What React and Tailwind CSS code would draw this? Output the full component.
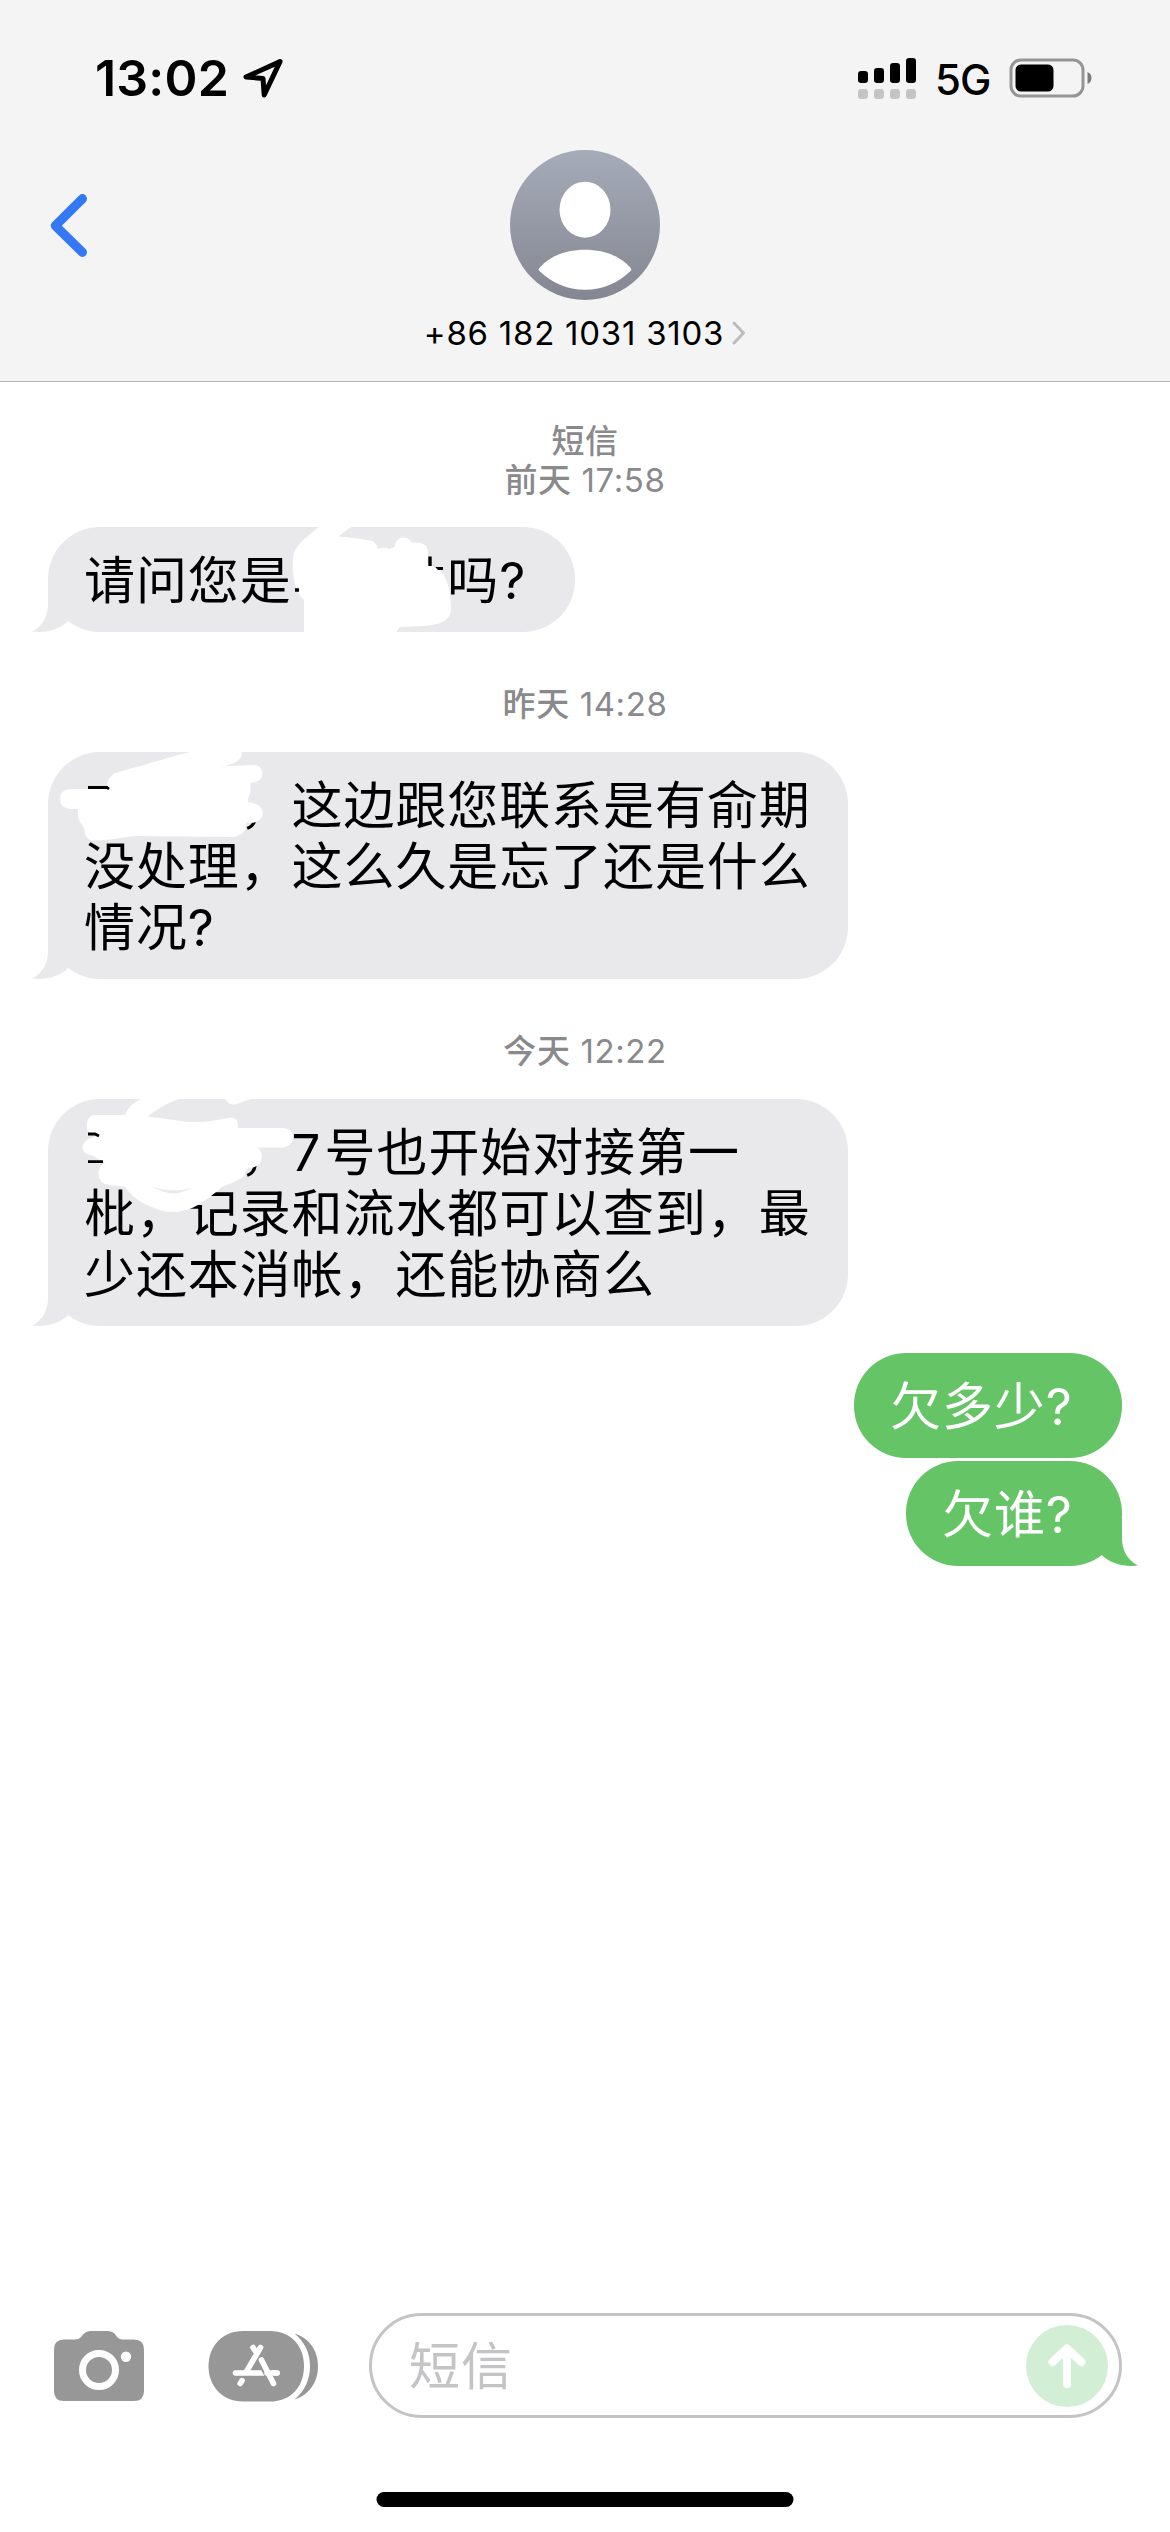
import React from 'react';

function StatusBar() {
  return (
    <div className="flex h-[156px] items-center justify-between pl-[95px] pr-[78px]">
      <div className="flex items-center gap-[12px]">
        <span className="text-[50px] font-semibold leading-[60px] tracking-[0.2px] text-black">13:02</span>
        <svg className="h-[42px] w-[44px]" viewBox="240 57 44 42" fill="none">
          <path d="M279 61.6 245 77 262 78.4 263.2 95Z" stroke="#000" strokeWidth="5" strokeLinejoin="round" />
        </svg>
      </div>
      <div className="flex items-center">
        <svg className="h-[42px] w-[58px]" viewBox="856 56 58 42">
          <rect x="856" y="70" width="10" height="12" rx="3.2" />
          <rect x="872" y="67" width="10" height="15" rx="3.2" />
          <rect x="888" y="62" width="10" height="20" rx="3.2" />
          <rect x="904" y="57" width="10" height="25" rx="3.2" />
          {[856, 872, 888, 904].map((x) => (
            <rect key={x} x={x} y="88" width="10" height="10" rx="3.2" fill="#c4c4c4" />
          ))}
        </svg>
        <span className="ml-[19px] mt-[3px] w-[74px] text-[42px] font-medium leading-[48px] tracking-[-1px] text-black">5G</span>
        <svg className="h-[40px] w-[83px]" viewBox="1008.5 57.5 83 40">
          <rect x="1010.5" y="59.5" width="72" height="36" rx="10" fill="none" stroke="#959595" strokeWidth="3" />
          <rect x="1015" y="64" width="38" height="27" rx="5.5" />
          <path d="M1087 71.5Q1091 73 1091 77.5T1087 83.5Z" fill="#7c7c7c" />
        </svg>
      </div>
    </div>
  );
}

function Header() {
  return (
    <header className="h-[382px] border-b border-[#b2b2b2] bg-[#f4f4f4]">
      <StatusBar />
      <div className="grid grid-cols-[1fr_auto_1fr] items-start">
        <svg className="ml-[49px] mt-[37px] h-[66px] w-[40px]" viewBox="49 193 40 66" fill="none">
          <path d="M82.4 198.7 55.3 225.7 82.4 252.3" stroke="#3478f6" strokeWidth="9.2" strokeLinecap="round" strokeLinejoin="round" />
        </svg>
        <div className="-mt-[6px] flex flex-col items-center">
          <svg className="h-[150px] w-[150px]" viewBox="0 0 150 150">
            <defs>
              <linearGradient id="avatar" x1="0" y1="0" x2="0" y2="1">
                <stop offset="0" stopColor="#a6abb9" />
                <stop offset="1" stopColor="#848791" />
              </linearGradient>
            </defs>
            <circle cx="75" cy="75" r="75" fill="url(#avatar)" />
            <ellipse cx="75" cy="59.7" rx="25.5" ry="28" fill="#fff" />
            <path d="M29.3 118C40 106 56 99.7 75 99.7S110 106 120.7 118Q122 119.5 120.5 121C108 133 93 139.7 75 139.7S42 133 29.5 121Q28 119.5 29.3 118Z" fill="#fff" />
          </svg>
          <div className="mt-[13px] flex items-center gap-[8px]">
            <span className="whitespace-nowrap text-[33px] leading-[40px] tracking-[0.75px] text-black">+86 182 1031 3103</span>
            <svg className="h-[26px] w-[14px]" viewBox="0 0 14 26" fill="none">
              <path d="M2 3 11.5 13 2 23" stroke="#bcbcbe" strokeWidth="3" strokeLinecap="round" strokeLinejoin="round" />
            </svg>
          </div>
        </div>
      </div>
    </header>
  );
}

function Stamp({ title, day, time, className }) {
  return (
    <div className={`text-center text-[33px] leading-[39px] text-[#8a8a8d] ${className}`}>
      {title && <div className="font-medium tracking-[0.6px]">{title}</div>}
      <div className="tracking-[0.6px]">
        <span className="font-medium">{day}</span> {time}
      </div>
    </div>
  );
}

function Bubble({ sent, tail, className, lines, children }) {
  return (
    <div className={`relative rounded-[52px] pb-[21px] pl-[36px] pt-[23px] text-[51px] leading-[61px] tracking-[0.9px] ${sent ? 'self-end bg-[#65c466] text-white' : 'bg-[#e9e9eb] text-black'} ${className}`}>
      {tail && (
        <svg
          className={`absolute bottom-0 h-[48px] w-[40px] ${sent ? '-right-[16px] -scale-x-100 text-[#65c466]' : '-left-[16px] text-[#e9e9eb]'}`}
          viewBox="0 0 40 48"
        >
          <path d="M16 0V20C16 32 11 42 0 47.5C14 49.5 28 45 36.6 36.7L38 20Z" fill="currentColor" />
        </svg>
      )}
      {lines.map((line, i) => (
        <div key={i} className="relative whitespace-nowrap">{line}</div>
      ))}
      {children}
    </div>
  );
}

// Blank run that keeps the room of a hidden three-character name
const Hidden = () => <span className="inline-block w-[155.7px]" />;

function Composer() {
  return (
    <footer className="flex h-[219px] items-start pl-[54px] pr-[48px]">
      <svg className="mt-[18px] h-[70px] w-[90px]" viewBox="0 0 90 70">
        <path d="M10 8.5H21Q25 8.5 27 6L30 2.5Q32.5 0 36 0H54Q58 0 60.5 2.5L63 6Q65 8.5 69 8.5H80Q90 8.5 90 18.5V60Q90 70 80 70H10Q0 70 0 60V18.5Q0 8.5 10 8.5Z" fill="#979797" />
        <circle cx="45" cy="39" r="16.5" fill="none" stroke="#fff" strokeWidth="7" />
        <circle cx="72" cy="25.7" r="5.2" fill="#fff" />
      </svg>
      <svg className="ml-[64px] mt-[18px] h-[71px] w-[110px]" viewBox="208 2331 110 71">
        <path d="M243 2331H270C291 2331 304 2346 304 2366.2S291 2401.5 270 2401.5H243C222 2401.5 208.5 2386 208.5 2366.2S222 2331 243 2331Z" fill="#979797" />
        <path d="M294.5 2333.5C309 2338 318 2350 318 2366.2S309 2395 294.5 2399.5C304.5 2391 310 2380 310 2366.2S304.5 2342 294.5 2333.5Z" fill="#979797" />
        <g fill="none" stroke="#fff" strokeWidth="5.6" strokeLinecap="round">
          <path d="M253 2347.5 257 2353.5M260.5 2347.5 246.5 2371.5" />
          <path d="M235.5 2373H277" />
          <path d="M242 2380.7 240.2 2383.5" />
          <path d="M261 2360 275 2386" stroke="#979797" strokeWidth="9" strokeLinecap="butt" />
          <path d="M267 2373H277" />
          <path d="M261.5 2360 273.5 2383.5" />
        </g>
      </svg>
      <div className="ml-[51px] flex h-[105px] flex-1 items-center justify-between rounded-full border-[3px] border-[#c4c4c6] pl-[37px] pr-[11px]">
        <span className="mt-[2px] text-[51px] leading-[61px] tracking-[0.9px] text-[#c4c4c6]">短信</span>
        <svg className="h-[82px] w-[82px]" viewBox="0 0 82 82" fill="none">
          <circle cx="41" cy="41" r="41" fill="#d2efd6" />
          <path d="M41 24V59M26.5 37 41 23.5 55.5 37" stroke="#fff" strokeWidth="8" strokeLinecap="round" strokeLinejoin="round" />
        </svg>
      </div>
    </footer>
  );
}

export default function App() {
  return (
    <div className="relative flex h-[2532px] w-[1170px] flex-col overflow-hidden bg-white font-['Inter','Noto_Sans_CJK_SC',sans-serif]">
      <Header />

      <main className="flex flex-1 flex-col items-start px-[48px] pt-[40px]">
        <Stamp className="mb-[27px] self-center" title="短信" day="前天" time="17:58" />
        <Bubble tail className="w-[527px]" lines={[<>请问您是<Hidden />吗?</>]}>
          <svg className="absolute inset-0 h-full w-full" viewBox="48 527 527 105">
            <path
              d="M320 526.5C312 532 299 543 295 550Q292.5 556 292.7 566Q293 580 297 590Q300 597 304 600V633H396.7Q397 630 400 627C420 626.5 434 626 443 621.7Q451 618 451 608C450.5 595 449 582 441.7 572Q436 566 430 565L427.5 562Q429 549 426 545.5Q421 542 411.7 542.5Q409 537.5 403 537.5Q396 538 394.5 547L389 549Q384 546.5 378 549Q376 542 371.7 540.7C362 539 350 537 338 536.5L351.7 526.5Z"
              fill="#fff"
            />
            <path d="M295 590H299M430 556.5V566" fill="none" stroke="#000" strokeWidth="3.4" />
            <path d="M432 563.5 435 567H443V570H438Z" />
          </svg>
        </Bubble>

        <Stamp className="mb-[28px] mt-[53px] self-center" day="昨天" time="14:28" />
        <Bubble
          tail
          className="w-[800px]"
          lines={[<><Hidden />，这边跟您联系是有俞期</>, '没处理，这么久是忘了还是什么', '情况?']}
        >
          <svg className="absolute inset-0 h-full w-full" viewBox="48 752 800 227">
            <path
              d="M192 751.5C170 757 130 769 114 773.5Q106 779 107 789H70Q60 790 60 799T70 809H78Q77 816 80 822Q85 827 85 833Q86 840 93 840.5C112 840.5 120 837 137 836L233 837Q240 836 245 830.5L246.5 822.5C256 824 262.5 820 262.7 813Q262.5 804 248 802Q247 800 250.5 792V783Q262 782 262.5 773.5Q262 765 253 765L220 766.5Q243 764 242 751.5Z"
              fill="#fff"
            />
            <path d="M88 787.5H107L109 789" fill="none" stroke="#000" strokeWidth="2.8" />
          </svg>
        </Bubble>

        <Stamp className="mb-[28px] mt-[53px] self-center" day="今天" time="12:22" />
        <Bubble
          tail
          className="w-[800px]"
          lines={[
            <><Hidden />，<span className="inline-block w-[33px]">7</span>号也开始对接第一</>,
            '枇，记录和流水都可以查到，最',
            '少还本消帐，还能协商么',
          ]}
        >
          <svg className="absolute inset-0 h-full w-full" viewBox="48 1099 800 227">
            <path
              d="M142 1098.5Q128 1105 125 1115H97Q87 1115 87 1124Q86 1132 92 1134L99 1136Q84 1138 82.5 1147Q82 1154 93 1155.7Q100 1160 105 1163Q98 1167 98.5 1174Q99 1184 110 1185L125 1186.7Q133 1198 143 1203Q160 1212 173 1212T197 1205.5Q211 1197 222 1186.7Q234 1183 243 1177L248 1168Q260 1168 261.7 1158Q262 1150 257 1147.5H283Q293 1146 293 1137.5T283 1128L238 1128Q239 1118 231 1117.5C215 1121 200 1123 185 1121.5L148 1116.5Q160 1106 180 1098.5Z"
              fill="#fff"
            />
            <path d="M225 1098.5Q228 1105 235 1104.5Q243 1102 252 1098.5Z" fill="#fff" />
            <path d="M151.5 1186.5Q173 1194 193 1187.5Q181 1193.5 173 1193.5T151.5 1186.5Z" fill="#e9e9eb" />
            <path d="M88 1134H95L99 1136M88 1161.7H103" fill="none" stroke="#000" strokeWidth="2.8" />
          </svg>
        </Bubble>

        <Bubble sent className="mt-[27px] w-[268px]" lines={['欠多少?']} />
        <Bubble sent tail className="mt-[3px] w-[216px]" lines={['欠谁?']} />
      </main>

      <Composer />
      <div className="absolute bottom-[25px] left-1/2 h-[15px] w-[417px] -translate-x-1/2 rounded-full bg-black" />
    </div>
  );
}
